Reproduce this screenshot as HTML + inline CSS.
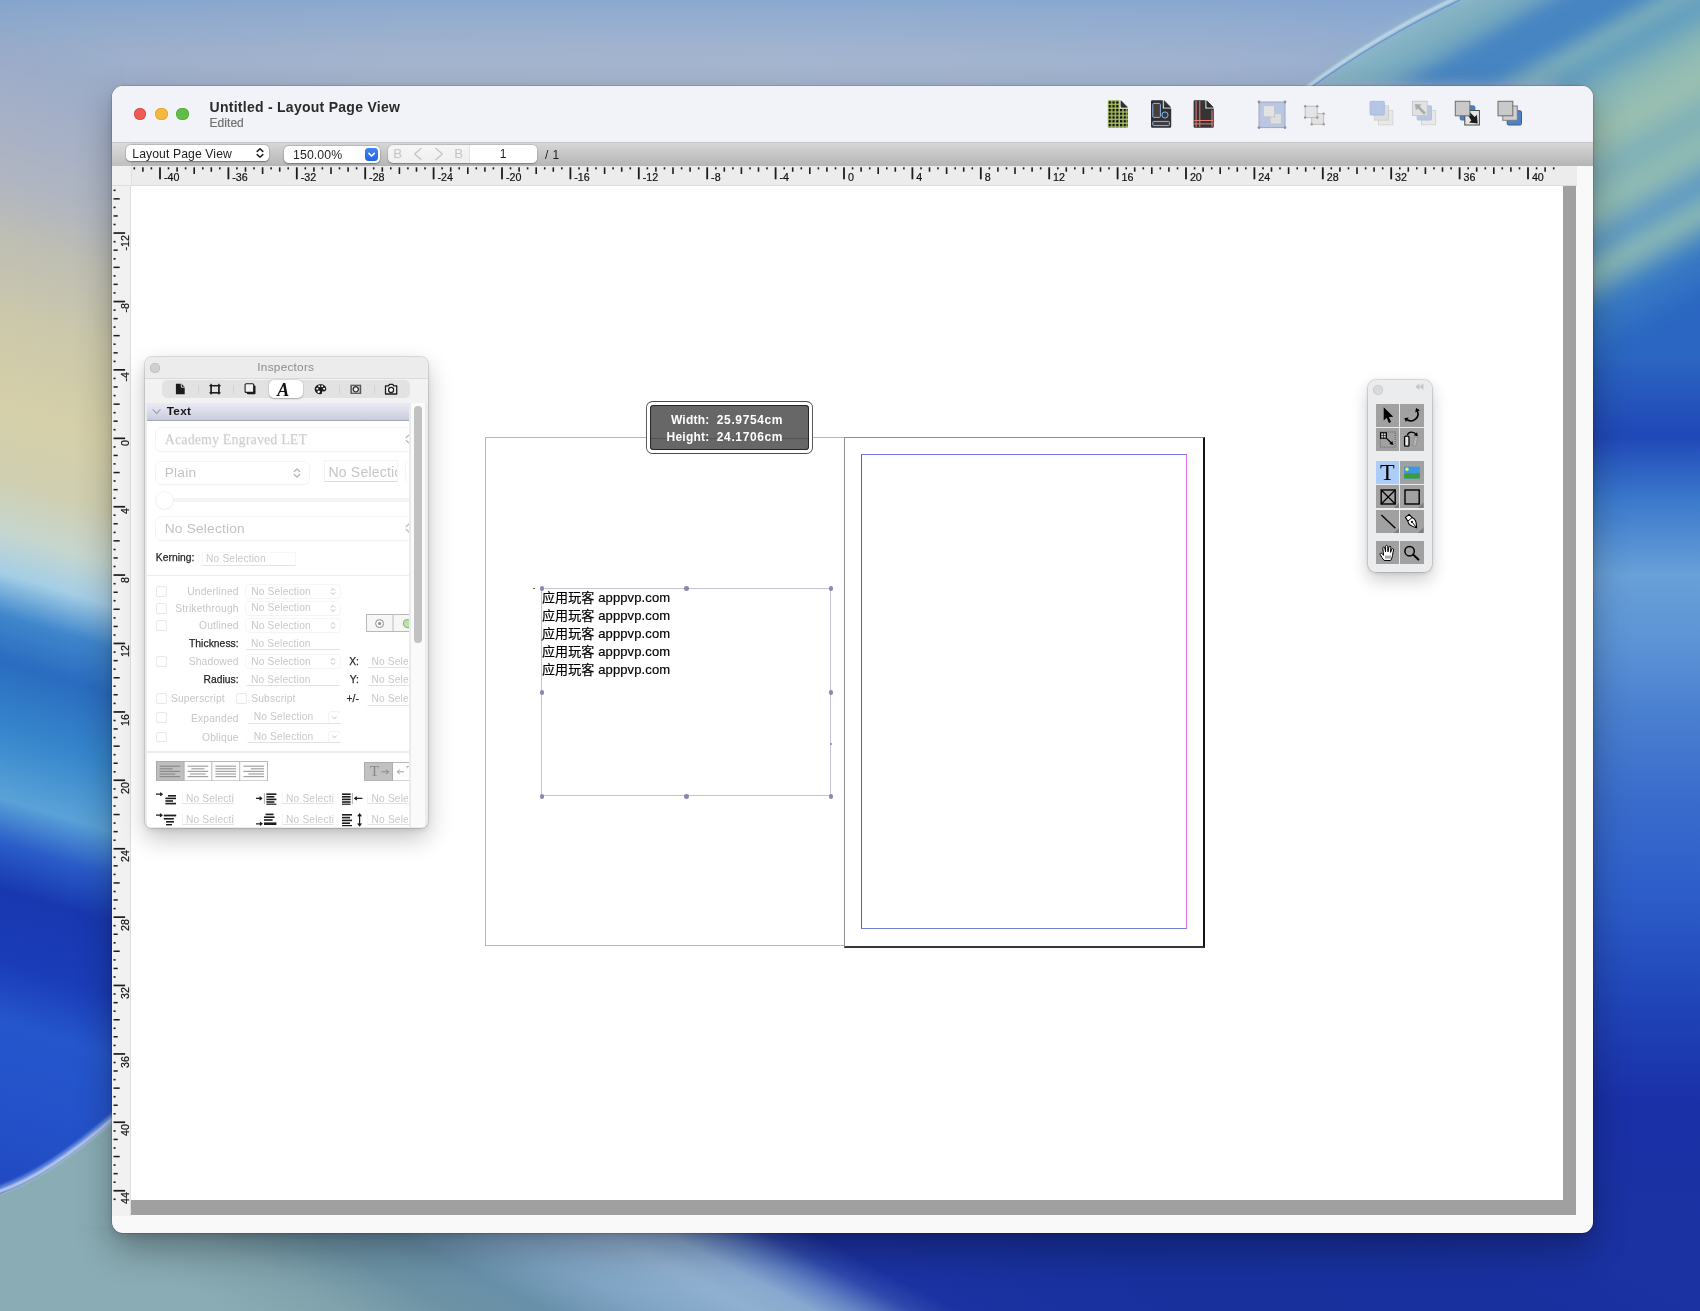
<!DOCTYPE html>
<html lang="zh"><head><meta charset="utf-8"><title>Untitled - Layout Page View</title>
<style>
*{box-sizing:border-box;margin:0;padding:0}
html,body{width:1700px;height:1311px;overflow:hidden;background:#1a30a0}
body{position:relative;font-family:"Liberation Sans","Noto Sans CJK SC",sans-serif;font-size:12px;color:#222;-webkit-font-smoothing:antialiased}
#wall{position:absolute;left:0;top:0;width:1700px;height:1311px}
#win{position:absolute;left:112px;top:86px;width:1481px;height:1147px;border-radius:11px;background:#f9f9f9;overflow:hidden;box-shadow:0 0 0 0.5px rgba(0,0,0,.26),0 16px 36px rgba(0,0,0,.30),0 3px 10px rgba(0,0,0,.12)}
#tbar{position:absolute;left:0;top:0;width:1481px;height:56px;background:#f1f3f8}
.tl{position:absolute;top:21.5px;width:13px;height:13px;border-radius:50%}
#title{position:absolute;left:97.5px;top:12px;font-weight:bold;font-size:13.5px;color:#2a2a2a;letter-spacing:.1px;white-space:nowrap}
#sub{position:absolute;left:97.5px;top:30px;font-size:11px;color:#6d6d6d;white-space:nowrap}
#band{position:absolute;left:0;top:56px;width:1481px;height:24px;background:linear-gradient(#d7d7d7,#c4c4c4 55%,#b5b5b5);border-top:1px solid #c6c6c6}
#hruler{position:absolute;left:0;top:80px;width:1465px;height:20px;background:#ececec;border-bottom:1px solid #dcdcdc}
.hl{position:absolute;top:5px;font-size:10.7px;line-height:12px;color:#111;white-space:nowrap}
#vruler{position:absolute;left:0;top:100px;width:19px;height:1030px;background:#f1f1f1;border-right:1px solid #dedede}
.vl{position:absolute;left:6.7px;font-size:10.7px;line-height:12px;color:#111;white-space:nowrap;transform-origin:0 0;transform:rotate(-90deg) translate(-100%,0)}
#canvas{position:absolute;left:19px;top:100px;width:1445px;height:1029px;background:#a0a0a0}
#paper{position:absolute;left:0;top:0;width:1432px;height:1014px;background:#fff}
.tl{width:12.7px;height:12.7px;top:21.7px}
#title{font-size:14px;letter-spacing:.27px;top:12.5px;color:#2b2b2b}
#sub{font-size:12px;top:29.6px;color:#707070;letter-spacing:.05px}
.pop{position:absolute;background:#fff;border-radius:4.5px;box-shadow:0 .5px 1.5px rgba(0,0,0,.35),0 0 0 .4px rgba(0,0,0,.12);white-space:nowrap;color:#1f1f1f}
#pop1{left:13.7px;top:2.3px;width:143.7px;height:16.2px}
#pop1 span{position:absolute;left:6.6px;top:0.3px;font-size:12.2px;line-height:16px;letter-spacing:.1px}
#pop2{left:172px;top:2.6px;width:95.6px;height:17px}
#pop2 span{position:absolute;left:9px;top:1.2px;font-size:12.3px;line-height:16px;letter-spacing:.1px}
#bluebtn{position:absolute;right:1.4px;top:2px;width:13.2px;height:13px;border-radius:3.4px;background:linear-gradient(#3f84f2,#2566e2)}
#bluebtn svg{display:block}
#seg{position:absolute;left:275.6px;top:1.7px;width:149.8px;height:18.8px;border-radius:5px;background:rgba(255,255,255,.78);box-shadow:0 .5px 1.5px rgba(0,0,0,.3),0 0 0 .4px rgba(0,0,0,.1)}
.sg{position:absolute;top:1.4px;font-size:13.4px;line-height:16px;color:#c6c6c6}
#pgf{position:absolute;left:81.5px;top:0;width:68.3px;height:18.8px;background:#fff;border-radius:0 5px 5px 0;border-left:1px solid #e4e4e4;text-align:center}
#pgf span{font-size:12px;line-height:19px;color:#1f1f1f;position:relative;left:-.6px}
#ofn{position:absolute;left:433px;top:4px;font-size:12px;line-height:16px;color:#1f1f1f;letter-spacing:.4px}

#win{will-change:transform}
#pgL{position:absolute;left:354px;top:251.4px;width:360px;height:508.5px;border:1px solid #b7b7b7}
#pgR{position:absolute;left:713.3px;top:251.1px;width:361.2px;height:510.6px;border-style:solid;border-color:#8e8e8e #131313 #383838 #8e8e8e;border-width:1.6px 2px 2.4px 1.6px;background:#fff}
#mg{position:absolute;left:730.2px;top:268.3px;width:326.1px;height:474.8px;border-style:solid;border-width:1.2px;border-color:#8f90e2 #d493dc #7f88c2 #8a5fba}
#tbox{position:absolute;left:410.4px;top:401.9px;width:289.7px;height:208.2px;border:1px solid #c5c3d8}
#tbox .h{position:absolute;width:4.6px;height:4.6px;border-radius:50%;background:#8a86ae}
#tbox .dot{position:absolute;width:1.8px;height:1.8px;border-radius:50%;background:#444}
#txt{position:absolute;left:411px;top:402.5px;font-size:13px;line-height:18px;color:#000;white-space:nowrap;letter-spacing:.12px}
#tip{position:absolute;left:514.8px;top:215.1px;width:167.4px;height:52.8px;border-radius:6.5px;background:#fff;box-shadow:inset 0 0 0 .9px #4a4a4a;padding:3.9px}
#tipin{width:100%;height:100%;border-radius:3.5px;background:rgba(92,92,92,.93);box-shadow:inset 0 0 0 1px #262626}
#tip table{border-collapse:collapse;position:absolute;left:19px;top:9.2px}
#tip td{font-weight:bold;font-size:11.9px;line-height:17.4px;color:#fff;padding:0;white-space:nowrap}
#tip td.k{text-align:right;padding-right:7.2px;width:45.5px}
#tip td{font-size:12px}
#tip td.k{letter-spacing:.25px}
#tip td.v{letter-spacing:.62px}
#insp{position:absolute;left:145px;top:357px;width:282.6px;height:471px;border-radius:6.5px;background:#ececec;overflow:hidden;box-shadow:0 0 0 .7px rgba(0,0,0,.15),0 10px 24px rgba(0,0,0,.24),0 2px 6px rgba(0,0,0,.10);will-change:transform}
#ititle{position:absolute;left:0;top:0;width:100%;height:21.6px;border-bottom:1px solid #d5d5d5;text-align:center;background:#ebebeb}
#ititle span{font-size:11.8px;line-height:21px;color:#8c8c8c;letter-spacing:.25px;position:relative;top:-.4px;left:-.5px}
#iclose{position:absolute;left:5.4px;top:5.4px;width:10.4px;height:10.4px;border-radius:50%;background:#cdcdcd;box-shadow:inset 0 0 0 .6px #b9b9b9}
#itabs{position:absolute;left:0;top:21.6px;width:100%;height:24px;background:#eeeeee}
#iseg{position:absolute;left:17.3px;top:2.1px;width:248.2px;height:18px;border-radius:5.5px;background:#e2e2e2}
#isel{position:absolute;left:106.5px;top:0;width:34.3px;height:17.6px;border-radius:5px;background:#fff;box-shadow:0 .5px 1.5px rgba(0,0,0,.28),0 0 0 .4px rgba(0,0,0,.08)}
.idv{position:absolute;top:4.3px;width:1px;height:9.6px;background:#d2d2d2}
#itabA{position:absolute;left:115.6px;top:-1.6px;font-family:"Liberation Serif","DejaVu Serif",serif;font-style:italic;font-weight:bold;font-size:17px;line-height:20px;color:#111}
#iscroll{position:absolute;left:2.4px;top:45.5px;width:262px;height:424.2px;background:#fff;overflow:hidden}
#ihead{position:absolute;left:0;top:0;width:262px;height:18px;background:linear-gradient(#e9eaf3,#dcdeea 45%,#c9cbdc);border-bottom:1.3px solid #a4a7bb}
#ihead b{position:absolute;left:19.4px;top:2.6px;font-size:11.8px;line-height:13px;color:#161616;letter-spacing:.25px}
.bp{position:absolute;background:#fff;border-radius:5.5px;box-shadow:0 0 0 .8px #e6e6e6,0 .6px 1.6px rgba(0,0,0,.09);white-space:nowrap;overflow:hidden}
.bp span{position:absolute;left:8.9px;top:2.6px;font-size:14.2px;line-height:17px;color:#c2c2c2;letter-spacing:.25px}
.bp span.serif{font-family:"Liberation Serif","DejaVu Serif",serif;font-size:14px;color:#cdcdcd;letter-spacing:.45px;top:2.7px;text-shadow:.5px .5px 0 #ececec}
.chv{position:absolute}
.bf{position:absolute;background:#fff;border:1px solid #ebebeb;border-bottom:1.6px solid #d4d4d4;white-space:nowrap;overflow:hidden}
.bf span{position:absolute;left:3.2px;top:2.2px;font-size:14.2px;line-height:17px;color:#c6c6c6;letter-spacing:.3px}
#strack{position:absolute;width:110px;height:3.6px;border-radius:2px;background:#f1f1f1}
#sknob{position:absolute;width:17px;height:17px;border-radius:50%;background:#fff;box-shadow:0 0 0 .7px #e9e9e9,0 .8px 2px rgba(0,0,0,.10)}
.dl{position:absolute;font-size:10.3px;line-height:12px;color:#262626;white-space:nowrap;letter-spacing:.3px;-webkit-text-stroke:.25px #262626}
.gl{position:absolute;font-size:10.3px;line-height:12px;color:#c6c6c6;white-space:nowrap;letter-spacing:.32px}
.rl{right:170.7px;text-align:right}
.rl2{right:50.4px;text-align:right}
.cb{position:absolute;width:10.8px;height:10.8px;border-radius:2.6px;background:#fff;box-shadow:inset 0 0 0 .9px #dcdcdc}
.sp{position:absolute;width:93.8px;height:13px;border-radius:3.4px;background:#fff;box-shadow:0 0 0 .7px #e8e8e8,0 .5px 1.2px rgba(0,0,0,.07);white-space:nowrap;overflow:hidden}
.sp span,.sf span{position:absolute;left:5.2px;top:.6px;font-size:10.2px;line-height:12px;color:#c8c8c8;letter-spacing:.36px}
.sf{position:absolute;height:13.2px;background:#fff;border:1px solid #efefef;border-bottom:1.3px solid #d9d9d9;white-space:nowrap;overflow:hidden}
.sf span{left:3.4px;top:.1px}
.cbtn{position:absolute;right:0;top:1px;width:10.6px;height:10.2px;border-radius:2.6px;background:#fff;box-shadow:0 0 0 .7px #e6e6e6,0 .5px 1px rgba(0,0,0,.08)}
.cbtn svg{position:absolute;left:1.8px;top:2.2px}
.sep{position:absolute;left:0;width:262px;height:1.2px;background:#ececec}
#tg{position:absolute;width:50px;height:17.4px;background:#f6f6f6;border:1px solid #b9b9b9}
#al{position:absolute;width:112px;height:20.4px}
#td{position:absolute;width:50px;height:19.4px}
#td .T1,#td .T2{position:absolute;font-family:"Liberation Serif",serif;font-size:15.5px;line-height:16px;top:1.6px;color:#8a8a8a}
#td .T1{left:5.8px}
#td .T2{left:42.4px;color:#a0a0a0}
#isb{position:absolute;left:265px;top:45.5px;width:14.6px;height:424.2px;background:#fafafa;border-left:1px solid #e9e9e9}
#isb i{position:absolute;left:3.3px;top:3px;width:7.6px;height:237.6px;border-radius:3.8px;background:#c2c2c2}
#tools{position:absolute;left:1367.7px;top:379.7px;width:64px;height:191.8px;border-radius:8px;background:#ebecee;box-shadow:0 0 0 .7px rgba(0,0,0,.16),0 8px 18px rgba(0,0,0,.2),0 1px 5px rgba(0,0,0,.12);will-change:transform}
#tclose{position:absolute;left:5.4px;top:5.2px;width:10px;height:10px;border-radius:50%;background:#dadadd;box-shadow:inset 0 0 0 .6px #c6c6ca}
.tc{position:absolute;width:23.4px;height:23.2px;background:#a1a1a1;overflow:hidden}
.tc svg{display:block}
.tsel{background:#abcdf7}
.tsel span{position:absolute;left:0;width:23.4px;text-align:center;top:-2.8px;font-family:"Liberation Serif",serif;font-size:23px;line-height:26px;color:#000}

#strack{width:250px}
.bp{box-shadow:0 0 0 .8px #efefef,0 .6px 1.6px rgba(0,0,0,.07)}
.bp span{font-size:13.7px;letter-spacing:.2px}
.bp span.serif{font-size:13.8px;letter-spacing:.22px}
.bf{border-color:#f0f0f0;border-bottom-color:#d8d8d8}
.bf span{top:3.2px;letter-spacing:.2px;font-size:14px}
.dl{letter-spacing:.05px}
.gl{letter-spacing:.17px}
.cb{box-shadow:inset 0 0 0 .9px #e4e4e4}
.sp{box-shadow:0 0 0 .7px #efefef,0 .5px 1.2px rgba(0,0,0,.06)}
.sp span,.sf span{letter-spacing:.16px}
.sf{border-color:#f4f4f4;border-bottom-color:#dcdcdc}
#itabA{font-size:18px;top:-.8px;left:115px}

#tip span{position:absolute;font-weight:bold;font-size:12px;line-height:14px;color:#fff;white-space:nowrap}
#tip span.k{right:103.6px;letter-spacing:.25px}
#tip span.v{left:71px;letter-spacing:.62px}
#tipin{background:rgba(96,96,96,.9)}
.tsel span{font-size:24px;top:-1.9px}
.hl,.vl{-webkit-text-stroke:.2px #111}

#band:before{content:"";position:absolute;left:0;top:0;width:19px;height:100%;background:rgba(255,255,255,.14)}
#hruler:before{content:"";position:absolute;left:0;top:0;width:19px;height:100%;background:#f1f1f1;border-right:1px solid #e2e2e2}

#tools{width:63.7px;border-radius:7.5px}
#mg{border-color:#7b74e4 #e26ae6 #6f80d6 #8a42cf}
#txt{-webkit-text-stroke:.18px #000}

#tipin{background:rgba(90,90,90,.92)}

#sub{-webkit-text-stroke:.2px #707070}
#iseg{top:1.8px}
.bp{box-shadow:0 0 0 .8px #f2f2f2,0 .6px 1.4px rgba(0,0,0,.06)}
.sp{box-shadow:0 0 0 .7px #f3f3f3,0 .5px 1.1px rgba(0,0,0,.05)}
.cb{box-shadow:inset 0 0 0 .9px #e8e8e8}
.sf{border-color:#f7f7f7;border-bottom-color:#e2e2e2}
.bf{border-color:#f4f4f4;border-bottom-color:#dcdcdc}
.cbtn{box-shadow:0 0 0 .7px #eeeeee,0 .5px 1px rgba(0,0,0,.06)}
#sknob{box-shadow:0 0 0 .7px #efefef,0 .8px 2px rgba(0,0,0,.08)}
#strack{background:#f4f4f4}
#iclose{left:5.2px;top:6px;width:9.8px;height:9.8px;background:#d0d0d0;box-shadow:inset 0 0 0 .8px #bcbcbc}
#itabs{background:#f2f2f2}
#ititle{background:#ececec;border-bottom-color:#dadada}

</style></head>
<body>
<svg id="wall" width="1700" height="1311" viewBox="0 0 1700 1311">
<defs>
<linearGradient id="gT" gradientUnits="userSpaceOnUse" x1="0" y1="0" x2="1700" y2="0">
<stop offset="0" stop-color="#9aacc9"/><stop offset=".066" stop-color="#9fb0cb"/><stop offset=".235" stop-color="#a6b5ce"/><stop offset=".47" stop-color="#a6b6d0"/><stop offset=".7" stop-color="#a1b3cf"/><stop offset=".8" stop-color="#9bafd0"/><stop offset="1" stop-color="#9bafd0"/>
</linearGradient>
<linearGradient id="gTv" x1="0" y1="0" x2="0" y2="1">
<stop offset="0" stop-color="#6f9cd0" stop-opacity=".5"/><stop offset=".3" stop-color="#7aa2d0" stop-opacity=".3"/><stop offset=".65" stop-color="#8fa8cc" stop-opacity=".05"/><stop offset="1" stop-color="#b0b4c0" stop-opacity=".15"/>
</linearGradient>
<linearGradient id="gB" gradientUnits="userSpaceOnUse" x1="0" y1="0" x2="1700" y2="0" gradientTransform="matrix(1 0 1.9 1 -2365 0)">
<stop offset="0" stop-color="#8aacb4"/><stop offset=".06" stop-color="#8aacb4"/><stop offset=".13" stop-color="#80a2ac"/><stop offset=".194" stop-color="#6c92a4"/><stop offset=".247" stop-color="#6890a9"/><stop offset=".306" stop-color="#7fa4c4"/><stop offset=".37" stop-color="#90b0d0"/><stop offset=".405" stop-color="#88a8cf"/><stop offset=".432" stop-color="#6282c4"/><stop offset=".462" stop-color="#2f49ad"/><stop offset=".49" stop-color="#1b32a2"/><stop offset=".647" stop-color="#17309c"/><stop offset=".824" stop-color="#18309e"/><stop offset=".93" stop-color="#1a32a2"/><stop offset="1" stop-color="#1a32a2"/>
</linearGradient>
<linearGradient id="gL" gradientUnits="userSpaceOnUse" x1="0" y1="0" x2="0" y2="1311" gradientTransform="matrix(1 0.3 0 1 0 -15)">
<stop offset="0" stop-color="#93a8c8" stop-opacity="0"/><stop offset=".03" stop-color="#96a9c7" stop-opacity="0"/><stop offset=".075" stop-color="#a1aec8"/><stop offset=".114" stop-color="#a9b2c5"/><stop offset=".152" stop-color="#b1b6c0"/><stop offset=".19" stop-color="#bebeb4"/><stop offset=".25" stop-color="#cbc8ab"/><stop offset=".32" stop-color="#d5d0a9"/><stop offset=".374" stop-color="#d0cfb0"/><stop offset=".416" stop-color="#c6d6cf"/><stop offset=".448" stop-color="#a4cee6"/><stop offset=".48" stop-color="#3f86cc"/><stop offset=".515" stop-color="#2a6cc0"/><stop offset=".568" stop-color="#3686cc"/><stop offset=".62" stop-color="#5aa2d8"/><stop offset=".654" stop-color="#2a5cc8"/><stop offset=".689" stop-color="#1838b0"/><stop offset=".744" stop-color="#1a3cb8"/><stop offset=".79" stop-color="#2556cc"/><stop offset=".85" stop-color="#2452ca"/><stop offset=".93" stop-color="#2048c0"/><stop offset="1" stop-color="#2048c0"/>
</linearGradient>
<linearGradient id="gR" gradientUnits="userSpaceOnUse" x1="0" y1="0" x2="0" y2="1311">
<stop offset="0" stop-color="#86b2b6" stop-opacity="0"/><stop offset=".2" stop-color="#6ea4bc" stop-opacity="0"/><stop offset=".25" stop-color="#2e6cc4"/><stop offset=".278" stop-color="#2a62c0"/><stop offset=".333" stop-color="#2048b8"/><stop offset=".38" stop-color="#3a78cc"/><stop offset=".438" stop-color="#68a0d8"/><stop offset=".488" stop-color="#5c94d6"/><stop offset=".543" stop-color="#4a80d0"/><stop offset=".61" stop-color="#3a6ccc"/><stop offset=".686" stop-color="#2c5cc8"/><stop offset=".763" stop-color="#2045b8"/><stop offset=".84" stop-color="#1a30a8"/><stop offset=".93" stop-color="#1a32a2"/><stop offset="1" stop-color="#1a32a2"/>
</linearGradient>
<linearGradient id="gC" gradientUnits="userSpaceOnUse" x1="1376" y1="38" x2="1566" y2="378">
<stop offset="0" stop-color="#b4d0e6"/><stop offset=".012" stop-color="#8ab6c8"/><stop offset=".06" stop-color="#80b0c0"/><stop offset=".11" stop-color="#72a6c0"/><stop offset=".15" stop-color="#4785c2"/><stop offset=".24" stop-color="#4585c2"/><stop offset=".285" stop-color="#7fb0ba"/><stop offset=".33" stop-color="#5f9cc0"/><stop offset=".41" stop-color="#88b6b6"/><stop offset=".5" stop-color="#9cc0b0"/><stop offset=".58" stop-color="#7fb0b8"/><stop offset=".66" stop-color="#92bcb2"/><stop offset=".74" stop-color="#5c98c4"/><stop offset=".8" stop-color="#8cbab4"/><stop offset=".88" stop-color="#3a7cc4"/><stop offset="1" stop-color="#2a66c2"/>
</linearGradient>
<linearGradient id="gD" gradientUnits="userSpaceOnUse" x1="0" y1="1150" x2="0" y2="1311">
<stop offset="0" stop-color="#98b8bc"/><stop offset=".5" stop-color="#8fb0b8"/><stop offset="1" stop-color="#84a6b0"/>
</linearGradient>
<filter id="bl" x="-5%" y="-5%" width="110%" height="110%"><feGaussianBlur stdDeviation="7"/></filter>
<filter id="bl2" x="-5%" y="-5%" width="110%" height="110%"><feGaussianBlur stdDeviation="1.2"/></filter>
</defs>
<rect x="0" y="0" width="1700" height="1311" fill="#8fa6c4"/>
<rect x="0" y="0" width="1700" height="200" fill="url(#gT)"/>
<rect x="0" y="0" width="1700" height="100" fill="url(#gTv)"/>
<rect x="0" y="0" width="125" height="1311" fill="url(#gL)"/>
<rect x="1580" y="0" width="120" height="1311" fill="url(#gR)"/>
<g filter="url(#bl)">
<path d="M1310,85 Q1375,36 1453,0 L1453,-40 L1760,-40 L1760,360 L1560,360 L1560,85 Z" fill="url(#gC)"/>
</g>
<path d="M1306,88 Q1374,37 1456,-2" fill="none" stroke="#c6dcea" stroke-width="3.4" opacity=".95" filter="url(#bl2)"/>
<path d="M1306,91 Q1376,40 1460,0" fill="none" stroke="#4f86d8" stroke-width="1.2" opacity=".7"/>
<g>
<path d="M-12,1198 L0,1194 Q46,1178.5 112,1122 L135,1102 L135,1311 L-12,1311 Z" fill="#8aacb4"/>
<rect x="0" y="1226" width="1700" height="85" fill="url(#gB)"/>
<path d="M-12,1195 L0,1191 Q46,1175.5 112,1119 L135,1099" fill="none" stroke="#c8d6ee" stroke-width="5" opacity=".9" filter="url(#bl2)"/>
<path d="M-12,1191 L0,1187 Q46,1171.5 112,1115 L135,1095" fill="none" stroke="#5f8ae0" stroke-width="3" opacity=".8" filter="url(#bl2)"/>
</g>
</svg>
<div id="win">
<div id="tbar">
<div class="tl" style="left:21.5px;background:#ee5b54;box-shadow:inset 0 0 0 .6px #d4453e"></div>
<div class="tl" style="left:43px;background:#f5b73c;box-shadow:inset 0 0 0 .6px #d9a02e"></div>
<div class="tl" style="left:64.1px;background:#5fbe45;box-shadow:inset 0 0 0 .6px #4aa436"></div>
<div id="title">Untitled - Layout Page View</div>
<div id="sub">Edited</div>
<svg id="ticons" width="440" height="40" viewBox="0 0 440 40" style="position:absolute;left:990px;top:8px">
<defs>
<pattern id="pgrid" x="0.9" y="1.2" width="3.75" height="3.75" patternUnits="userSpaceOnUse"><rect x="0" y="0" width="2.3" height="2.3" fill="#0b0b0b"/></pattern>
<clipPath id="cdoc"><path d="M0,0 L11.8,0 L11.8,8.3 L20.2,8.3 L20.2,27.6 L0,27.6 Z"/></clipPath>
</defs>
<!-- doc 1 : baseline grid -->
<g transform="translate(5.8,6.2)">
<path d="M0,1.2 Q0,0 1.2,0 L11.8,0 L11.8,8.3 L20.2,8.3 L20.2,26.4 Q20.2,27.6 19,27.6 L1.2,27.6 Q0,27.6 0,26.4 Z" fill="#a6bf5e"/>
<rect x="0" y="0" width="20.2" height="27.6" fill="url(#pgrid)" clip-path="url(#cdoc)"/>
<path d="M13.2,0.6 L19.6,7 L13.2,7 Z" fill="#2f2f31" stroke="#2f2f31" stroke-width=".8" stroke-linejoin="round"/>
</g>
<!-- doc 2 : frames -->
<g transform="translate(49,6.2)">
<path d="M0,1.2 Q0,0 1.2,0 L11.8,0 L11.8,8.3 L20.2,8.3 L20.2,26.4 Q20.2,27.6 19,27.6 L1.2,27.6 Q0,27.6 0,26.4 Z" fill="#2e2f33"/>
<path d="M13.2,0.6 L19.6,7 L13.2,7 Z" fill="#2f2f31" stroke="#2f2f31" stroke-width=".8" stroke-linejoin="round"/>
<rect x="1.8" y="3.2" width="7.6" height="14" rx="1" fill="#4a3e3a" stroke="#8db6ec" stroke-width="1"/>
<circle cx="14" cy="14.8" r="3.1" fill="#34383f" stroke="#8db6ec" stroke-width="1"/>
<rect x="1.8" y="21.2" width="16.6" height="4.2" rx=".8" fill="#3c3e44" stroke="#8db6ec" stroke-width="1"/>
</g>
<!-- doc 3 : guides -->
<g transform="translate(91.6,6.2)">
<path d="M0,1.2 Q0,0 1.2,0 L11.8,0 L11.8,8.3 L20.2,8.3 L20.2,26.4 Q20.2,27.6 19,27.6 L1.2,27.6 Q0,27.6 0,26.4 Z" fill="#343436"/>
<path d="M13.2,0.6 L19.6,7 L13.2,7 Z" fill="#2f2f31" stroke="#2f2f31" stroke-width=".8" stroke-linejoin="round"/>
<g stroke="#e97f76" stroke-width="1" fill="none"><path d="M2.5,0.8V26.8M6.2,0.8V26.8M18.4,10V26.8M0.6,20.3H19.6M0.6,23.7H19.6"/></g>
</g>
<!-- group (selected) -->
<g transform="translate(156,7)">
<rect x="1" y="1" width="26" height="25.6" fill="#b9c7e4" stroke="#9fa9bb" stroke-width="1"/>
<g fill="#8e949e"><circle cx="1" cy="1" r="1.4"/><circle cx="27" cy="1" r="1.4"/><circle cx="1" cy="26.6" r="1.4"/><circle cx="27" cy="26.6" r="1.4"/></g>
<rect x="12" y="12.6" width="11.4" height="10.4" fill="#dedede" stroke="#c2c2c2" stroke-width=".9"/>
<rect x="5.2" y="4.7" width="11.4" height="11.2" fill="#e3e3e3" stroke="#c2c2c2" stroke-width=".9"/>
</g>
<!-- ungroup (disabled) -->
<g transform="translate(202,7)">
<rect x="7.7" y="12.6" width="12" height="10.7" fill="#e2e2e2" stroke="#b9b9b9" stroke-width=".9"/>
<rect x="1.2" y="5.2" width="12" height="11.4" fill="#e4e4e4" stroke="#b9b9b9" stroke-width=".9"/>
<g fill="#9d9d9d"><circle cx="1.2" cy="5.2" r="1.3"/><circle cx="13.2" cy="5.2" r="1.3"/><circle cx="1.2" cy="16.6" r="1.3"/><circle cx="13.2" cy="16.6" r="1.3"/><circle cx="19.7" cy="12.6" r="1.2"/><circle cx="7.7" cy="23.3" r="1.2"/><circle cx="19.7" cy="23.3" r="1.2"/></g>
</g>
<!-- bring to front (disabled) -->
<g transform="translate(268,7)">
<rect x="8.5" y="9.5" width="14.3" height="14.3" fill="#e8e8e8" stroke="#d0d0d0" stroke-width=".8"/>
<rect x="4.3" y="4.8" width="14.3" height="14.3" fill="#dedede" stroke="#cccccc" stroke-width=".8"/>
<rect x="0" y=".3" width="14.4" height="13.8" rx="1" fill="#b5c5e5" stroke="#a9b9d9" stroke-width=".8"/>
</g>
<!-- send forward (disabled) -->
<g transform="translate(310.4,7)">
<rect x="9" y="9.5" width="14.3" height="14.3" fill="#e8e8e8" stroke="#d0d0d0" stroke-width=".8"/>
<rect x="4.8" y="4.8" width="14.3" height="14.3" rx="1" fill="#b9c7e1" stroke="#adbbd5" stroke-width=".8"/>
<rect x="0" y=".3" width="14.8" height="14.2" fill="#e2e2e2" stroke="#c6c6c6" stroke-width=".9"/>
<path d="M2.6,3 L9.4,3.6 L7.4,5.6 L13.6,11.8 L11.6,13.8 L5.4,7.6 L3.4,9.6 Z" fill="#ababab"/>
</g>
<!-- send backward -->
<g transform="translate(353.3,7)">
<rect x="4.8" y="4.8" width="14.8" height="14.3" rx="1.5" fill="#4a82c8" stroke="#3c68a8" stroke-width=".8"/>
<rect x="9.5" y="9.5" width="14.6" height="14.5" fill="#e5e5e5" stroke="#4a4a4a" stroke-width="1"/>
<path d="M12,13 L14.2,10.8 L19.4,16 L21.6,13.8 L22.4,22.4 L13.8,21.6 L16,19.4 Z" fill="#1b1b1b"/>
<rect x="0" y=".3" width="14.6" height="14.5" fill="#c9c9c9" stroke="#6d6d6d" stroke-width="1"/>
</g>
<!-- send to back -->
<g transform="translate(396,7)">
<rect x="9.2" y="9.8" width="14.3" height="14.2" rx="1.5" fill="#4a82c8" stroke="#3a5c96" stroke-width="1"/>
<rect x="4.8" y="5" width="14.5" height="14.3" fill="#d0d0d0" stroke="#7d7d7d" stroke-width="1"/>
<rect x="0" y=".3" width="14.8" height="14.5" fill="#c9c9c9" stroke="#6d6d6d" stroke-width="1"/>
</g>
</svg>
</div>
<div id="band">
<div class="pop" id="pop1"><span>Layout Page View</span>
<svg width="8" height="12" viewBox="0 0 8 12" style="position:absolute;right:5.5px;top:2.2px"><path d="M1.2,4.4 L4,1.8 L6.8,4.4 M1.2,7.6 L4,10.2 L6.8,7.6" fill="none" stroke="#222" stroke-width="1.5" stroke-linecap="round" stroke-linejoin="round"/></svg>
</div>
<div class="pop" id="pop2"><span>150.00%</span>
<div id="bluebtn"><svg width="13" height="13" viewBox="0 0 13 13"><path d="M3.9,5.4 L6.6,8 L9.3,5.4" fill="none" stroke="#fff" stroke-width="1.6" stroke-linecap="round" stroke-linejoin="round"/></svg></div>
</div>
<div id="seg">
<span class="sg" style="left:5.6px">B</span>
<svg width="12" height="14" viewBox="0 0 12 14" style="position:absolute;left:24.5px;top:2.6px"><path d="M9,1.5 L2.6,7 L9,12.5" fill="none" stroke="#c3c3c3" stroke-width="1.2" stroke-linecap="round" stroke-linejoin="round"/></svg>
<svg width="12" height="14" viewBox="0 0 12 14" style="position:absolute;left:45.4px;top:2.6px"><path d="M3,1.5 L9.4,7 L3,12.5" fill="none" stroke="#c3c3c3" stroke-width="1.2" stroke-linecap="round" stroke-linejoin="round"/></svg>
<span class="sg" style="left:66.6px">B</span>
<div id="pgf"><span>1</span></div>
</div>
<span id="ofn">/ 1</span>
</div>
<div id="hruler">
<svg width="1465" height="20" style="position:absolute;left:0;top:0">
<rect x="21.5" y="1.3" width="1.6" height="2.1" fill="#1c1c1c"/><rect x="30.1" y="1.3" width="1.6" height="4.4" fill="#1c1c1c"/><rect x="38.6" y="1.3" width="1.6" height="2.1" fill="#1c1c1c"/><rect x="47.1" y="1.3" width="1.8" height="12.0" fill="#1c1c1c"/><rect x="55.7" y="1.3" width="1.6" height="2.1" fill="#1c1c1c"/><rect x="64.3" y="1.3" width="1.6" height="4.4" fill="#1c1c1c"/><rect x="72.8" y="1.3" width="1.6" height="2.1" fill="#1c1c1c"/><rect x="81.4" y="1.3" width="1.6" height="6.7" fill="#1c1c1c"/><rect x="90.0" y="1.3" width="1.6" height="2.1" fill="#1c1c1c"/><rect x="98.5" y="1.3" width="1.6" height="4.4" fill="#1c1c1c"/><rect x="107.0" y="1.3" width="1.6" height="2.1" fill="#1c1c1c"/><rect x="115.5" y="1.3" width="1.8" height="12.0" fill="#1c1c1c"/><rect x="124.1" y="1.3" width="1.6" height="2.1" fill="#1c1c1c"/><rect x="132.7" y="1.3" width="1.6" height="4.4" fill="#1c1c1c"/><rect x="141.2" y="1.3" width="1.6" height="2.1" fill="#1c1c1c"/><rect x="149.8" y="1.3" width="1.6" height="6.7" fill="#1c1c1c"/><rect x="158.3" y="1.3" width="1.6" height="2.1" fill="#1c1c1c"/><rect x="166.9" y="1.3" width="1.6" height="4.4" fill="#1c1c1c"/><rect x="175.4" y="1.3" width="1.6" height="2.1" fill="#1c1c1c"/><rect x="183.9" y="1.3" width="1.8" height="12.0" fill="#1c1c1c"/><rect x="192.5" y="1.3" width="1.6" height="2.1" fill="#1c1c1c"/><rect x="201.1" y="1.3" width="1.6" height="4.4" fill="#1c1c1c"/><rect x="209.6" y="1.3" width="1.6" height="2.1" fill="#1c1c1c"/><rect x="218.2" y="1.3" width="1.6" height="6.7" fill="#1c1c1c"/><rect x="226.7" y="1.3" width="1.6" height="2.1" fill="#1c1c1c"/><rect x="235.3" y="1.3" width="1.6" height="4.4" fill="#1c1c1c"/><rect x="243.8" y="1.3" width="1.6" height="2.1" fill="#1c1c1c"/><rect x="252.3" y="1.3" width="1.8" height="12.0" fill="#1c1c1c"/><rect x="260.9" y="1.3" width="1.6" height="2.1" fill="#1c1c1c"/><rect x="269.5" y="1.3" width="1.6" height="4.4" fill="#1c1c1c"/><rect x="278.0" y="1.3" width="1.6" height="2.1" fill="#1c1c1c"/><rect x="286.6" y="1.3" width="1.6" height="6.7" fill="#1c1c1c"/><rect x="295.1" y="1.3" width="1.6" height="2.1" fill="#1c1c1c"/><rect x="303.7" y="1.3" width="1.6" height="4.4" fill="#1c1c1c"/><rect x="312.2" y="1.3" width="1.6" height="2.1" fill="#1c1c1c"/><rect x="320.7" y="1.3" width="1.8" height="12.0" fill="#1c1c1c"/><rect x="329.3" y="1.3" width="1.6" height="2.1" fill="#1c1c1c"/><rect x="337.9" y="1.3" width="1.6" height="4.4" fill="#1c1c1c"/><rect x="346.4" y="1.3" width="1.6" height="2.1" fill="#1c1c1c"/><rect x="355.0" y="1.3" width="1.6" height="6.7" fill="#1c1c1c"/><rect x="363.5" y="1.3" width="1.6" height="2.1" fill="#1c1c1c"/><rect x="372.1" y="1.3" width="1.6" height="4.4" fill="#1c1c1c"/><rect x="380.6" y="1.3" width="1.6" height="2.1" fill="#1c1c1c"/><rect x="389.1" y="1.3" width="1.8" height="12.0" fill="#1c1c1c"/><rect x="397.7" y="1.3" width="1.6" height="2.1" fill="#1c1c1c"/><rect x="406.3" y="1.3" width="1.6" height="4.4" fill="#1c1c1c"/><rect x="414.8" y="1.3" width="1.6" height="2.1" fill="#1c1c1c"/><rect x="423.4" y="1.3" width="1.6" height="6.7" fill="#1c1c1c"/><rect x="431.9" y="1.3" width="1.6" height="2.1" fill="#1c1c1c"/><rect x="440.5" y="1.3" width="1.6" height="4.4" fill="#1c1c1c"/><rect x="449.0" y="1.3" width="1.6" height="2.1" fill="#1c1c1c"/><rect x="457.5" y="1.3" width="1.8" height="12.0" fill="#1c1c1c"/><rect x="466.2" y="1.3" width="1.6" height="2.1" fill="#1c1c1c"/><rect x="474.7" y="1.3" width="1.6" height="4.4" fill="#1c1c1c"/><rect x="483.2" y="1.3" width="1.6" height="2.1" fill="#1c1c1c"/><rect x="491.8" y="1.3" width="1.6" height="6.7" fill="#1c1c1c"/><rect x="500.3" y="1.3" width="1.6" height="2.1" fill="#1c1c1c"/><rect x="508.9" y="1.3" width="1.6" height="4.4" fill="#1c1c1c"/><rect x="517.5" y="1.3" width="1.6" height="2.1" fill="#1c1c1c"/><rect x="525.9" y="1.3" width="1.8" height="12.0" fill="#1c1c1c"/><rect x="534.6" y="1.3" width="1.6" height="2.1" fill="#1c1c1c"/><rect x="543.1" y="1.3" width="1.6" height="4.4" fill="#1c1c1c"/><rect x="551.7" y="1.3" width="1.6" height="2.1" fill="#1c1c1c"/><rect x="560.2" y="1.3" width="1.6" height="6.7" fill="#1c1c1c"/><rect x="568.8" y="1.3" width="1.6" height="2.1" fill="#1c1c1c"/><rect x="577.3" y="1.3" width="1.6" height="4.4" fill="#1c1c1c"/><rect x="585.9" y="1.3" width="1.6" height="2.1" fill="#1c1c1c"/><rect x="594.3" y="1.3" width="1.8" height="12.0" fill="#1c1c1c"/><rect x="603.0" y="1.3" width="1.6" height="2.1" fill="#1c1c1c"/><rect x="611.5" y="1.3" width="1.6" height="4.4" fill="#1c1c1c"/><rect x="620.1" y="1.3" width="1.6" height="2.1" fill="#1c1c1c"/><rect x="628.6" y="1.3" width="1.6" height="6.7" fill="#1c1c1c"/><rect x="637.2" y="1.3" width="1.6" height="2.1" fill="#1c1c1c"/><rect x="645.7" y="1.3" width="1.6" height="4.4" fill="#1c1c1c"/><rect x="654.2" y="1.3" width="1.6" height="2.1" fill="#1c1c1c"/><rect x="662.7" y="1.3" width="1.8" height="12.0" fill="#1c1c1c"/><rect x="671.4" y="1.3" width="1.6" height="2.1" fill="#1c1c1c"/><rect x="679.9" y="1.3" width="1.6" height="4.4" fill="#1c1c1c"/><rect x="688.5" y="1.3" width="1.6" height="2.1" fill="#1c1c1c"/><rect x="697.0" y="1.3" width="1.6" height="6.7" fill="#1c1c1c"/><rect x="705.6" y="1.3" width="1.6" height="2.1" fill="#1c1c1c"/><rect x="714.1" y="1.3" width="1.6" height="4.4" fill="#1c1c1c"/><rect x="722.7" y="1.3" width="1.6" height="2.1" fill="#1c1c1c"/><rect x="731.1" y="1.3" width="1.8" height="12.0" fill="#1c1c1c"/><rect x="739.8" y="1.3" width="1.6" height="2.1" fill="#1c1c1c"/><rect x="748.3" y="1.3" width="1.6" height="4.4" fill="#1c1c1c"/><rect x="756.9" y="1.3" width="1.6" height="2.1" fill="#1c1c1c"/><rect x="765.4" y="1.3" width="1.6" height="6.7" fill="#1c1c1c"/><rect x="774.0" y="1.3" width="1.6" height="2.1" fill="#1c1c1c"/><rect x="782.5" y="1.3" width="1.6" height="4.4" fill="#1c1c1c"/><rect x="791.1" y="1.3" width="1.6" height="2.1" fill="#1c1c1c"/><rect x="799.5" y="1.3" width="1.8" height="12.0" fill="#1c1c1c"/><rect x="808.2" y="1.3" width="1.6" height="2.1" fill="#1c1c1c"/><rect x="816.7" y="1.3" width="1.6" height="4.4" fill="#1c1c1c"/><rect x="825.2" y="1.3" width="1.6" height="2.1" fill="#1c1c1c"/><rect x="833.8" y="1.3" width="1.6" height="6.7" fill="#1c1c1c"/><rect x="842.4" y="1.3" width="1.6" height="2.1" fill="#1c1c1c"/><rect x="850.9" y="1.3" width="1.6" height="4.4" fill="#1c1c1c"/><rect x="859.5" y="1.3" width="1.6" height="2.1" fill="#1c1c1c"/><rect x="867.9" y="1.3" width="1.8" height="12.0" fill="#1c1c1c"/><rect x="876.6" y="1.3" width="1.6" height="2.1" fill="#1c1c1c"/><rect x="885.1" y="1.3" width="1.6" height="4.4" fill="#1c1c1c"/><rect x="893.7" y="1.3" width="1.6" height="2.1" fill="#1c1c1c"/><rect x="902.2" y="1.3" width="1.6" height="6.7" fill="#1c1c1c"/><rect x="910.8" y="1.3" width="1.6" height="2.1" fill="#1c1c1c"/><rect x="919.3" y="1.3" width="1.6" height="4.4" fill="#1c1c1c"/><rect x="927.9" y="1.3" width="1.6" height="2.1" fill="#1c1c1c"/><rect x="936.3" y="1.3" width="1.8" height="12.0" fill="#1c1c1c"/><rect x="945.0" y="1.3" width="1.6" height="2.1" fill="#1c1c1c"/><rect x="953.5" y="1.3" width="1.6" height="4.4" fill="#1c1c1c"/><rect x="962.0" y="1.3" width="1.6" height="2.1" fill="#1c1c1c"/><rect x="970.6" y="1.3" width="1.6" height="6.7" fill="#1c1c1c"/><rect x="979.2" y="1.3" width="1.6" height="2.1" fill="#1c1c1c"/><rect x="987.7" y="1.3" width="1.6" height="4.4" fill="#1c1c1c"/><rect x="996.2" y="1.3" width="1.6" height="2.1" fill="#1c1c1c"/><rect x="1004.7" y="1.3" width="1.8" height="12.0" fill="#1c1c1c"/><rect x="1013.4" y="1.3" width="1.6" height="2.1" fill="#1c1c1c"/><rect x="1021.9" y="1.3" width="1.6" height="4.4" fill="#1c1c1c"/><rect x="1030.5" y="1.3" width="1.6" height="2.1" fill="#1c1c1c"/><rect x="1039.0" y="1.3" width="1.6" height="6.7" fill="#1c1c1c"/><rect x="1047.5" y="1.3" width="1.6" height="2.1" fill="#1c1c1c"/><rect x="1056.1" y="1.3" width="1.6" height="4.4" fill="#1c1c1c"/><rect x="1064.7" y="1.3" width="1.6" height="2.1" fill="#1c1c1c"/><rect x="1073.1" y="1.3" width="1.8" height="12.0" fill="#1c1c1c"/><rect x="1081.8" y="1.3" width="1.6" height="2.1" fill="#1c1c1c"/><rect x="1090.3" y="1.3" width="1.6" height="4.4" fill="#1c1c1c"/><rect x="1098.9" y="1.3" width="1.6" height="2.1" fill="#1c1c1c"/><rect x="1107.4" y="1.3" width="1.6" height="6.7" fill="#1c1c1c"/><rect x="1116.0" y="1.3" width="1.6" height="2.1" fill="#1c1c1c"/><rect x="1124.5" y="1.3" width="1.6" height="4.4" fill="#1c1c1c"/><rect x="1133.0" y="1.3" width="1.6" height="2.1" fill="#1c1c1c"/><rect x="1141.5" y="1.3" width="1.8" height="12.0" fill="#1c1c1c"/><rect x="1150.2" y="1.3" width="1.6" height="2.1" fill="#1c1c1c"/><rect x="1158.7" y="1.3" width="1.6" height="4.4" fill="#1c1c1c"/><rect x="1167.2" y="1.3" width="1.6" height="2.1" fill="#1c1c1c"/><rect x="1175.8" y="1.3" width="1.6" height="6.7" fill="#1c1c1c"/><rect x="1184.4" y="1.3" width="1.6" height="2.1" fill="#1c1c1c"/><rect x="1192.9" y="1.3" width="1.6" height="4.4" fill="#1c1c1c"/><rect x="1201.5" y="1.3" width="1.6" height="2.1" fill="#1c1c1c"/><rect x="1209.9" y="1.3" width="1.8" height="12.0" fill="#1c1c1c"/><rect x="1218.5" y="1.3" width="1.6" height="2.1" fill="#1c1c1c"/><rect x="1227.1" y="1.3" width="1.6" height="4.4" fill="#1c1c1c"/><rect x="1235.7" y="1.3" width="1.6" height="2.1" fill="#1c1c1c"/><rect x="1244.2" y="1.3" width="1.6" height="6.7" fill="#1c1c1c"/><rect x="1252.8" y="1.3" width="1.6" height="2.1" fill="#1c1c1c"/><rect x="1261.3" y="1.3" width="1.6" height="4.4" fill="#1c1c1c"/><rect x="1269.9" y="1.3" width="1.6" height="2.1" fill="#1c1c1c"/><rect x="1278.3" y="1.3" width="1.8" height="12.0" fill="#1c1c1c"/><rect x="1287.0" y="1.3" width="1.6" height="2.1" fill="#1c1c1c"/><rect x="1295.5" y="1.3" width="1.6" height="4.4" fill="#1c1c1c"/><rect x="1304.0" y="1.3" width="1.6" height="2.1" fill="#1c1c1c"/><rect x="1312.6" y="1.3" width="1.6" height="6.7" fill="#1c1c1c"/><rect x="1321.2" y="1.3" width="1.6" height="2.1" fill="#1c1c1c"/><rect x="1329.7" y="1.3" width="1.6" height="4.4" fill="#1c1c1c"/><rect x="1338.3" y="1.3" width="1.6" height="2.1" fill="#1c1c1c"/><rect x="1346.7" y="1.3" width="1.8" height="12.0" fill="#1c1c1c"/><rect x="1355.4" y="1.3" width="1.6" height="2.1" fill="#1c1c1c"/><rect x="1363.9" y="1.3" width="1.6" height="4.4" fill="#1c1c1c"/><rect x="1372.5" y="1.3" width="1.6" height="2.1" fill="#1c1c1c"/><rect x="1381.0" y="1.3" width="1.6" height="6.7" fill="#1c1c1c"/><rect x="1389.5" y="1.3" width="1.6" height="2.1" fill="#1c1c1c"/><rect x="1398.1" y="1.3" width="1.6" height="4.4" fill="#1c1c1c"/><rect x="1406.7" y="1.3" width="1.6" height="2.1" fill="#1c1c1c"/><rect x="1415.1" y="1.3" width="1.8" height="12.0" fill="#1c1c1c"/><rect x="1423.8" y="1.3" width="1.6" height="2.1" fill="#1c1c1c"/><rect x="1432.3" y="1.3" width="1.6" height="4.4" fill="#1c1c1c"/><rect x="1440.9" y="1.3" width="1.6" height="2.1" fill="#1c1c1c"/>
</svg>
<span class="hl" style="left:51.9px">-40</span><span class="hl" style="left:120.3px">-36</span><span class="hl" style="left:188.7px">-32</span><span class="hl" style="left:257.1px">-28</span><span class="hl" style="left:325.5px">-24</span><span class="hl" style="left:393.9px">-20</span><span class="hl" style="left:462.3px">-16</span><span class="hl" style="left:530.7px">-12</span><span class="hl" style="left:599.1px">-8</span><span class="hl" style="left:667.5px">-4</span><span class="hl" style="left:735.9px">0</span><span class="hl" style="left:804.3px">4</span><span class="hl" style="left:872.7px">8</span><span class="hl" style="left:941.1px">12</span><span class="hl" style="left:1009.5px">16</span><span class="hl" style="left:1077.9px">20</span><span class="hl" style="left:1146.3px">24</span><span class="hl" style="left:1214.7px">28</span><span class="hl" style="left:1283.1px">32</span><span class="hl" style="left:1351.5px">36</span><span class="hl" style="left:1419.9px">40</span>
</div>
<div id="vruler">
<svg width="19" height="1030" style="position:absolute;left:0;top:0">
<rect x="1.5" y="3.5" width="2.1" height="1.6" fill="#1c1c1c"/><rect x="1.5" y="12.1" width="6.2" height="1.5" fill="#1c1c1c"/><rect x="1.5" y="20.6" width="2.1" height="1.6" fill="#1c1c1c"/><rect x="1.5" y="29.2" width="4.2" height="1.5" fill="#1c1c1c"/><rect x="1.5" y="37.7" width="2.1" height="1.6" fill="#1c1c1c"/><rect x="1.5" y="46.2" width="11.6" height="1.7" fill="#1c1c1c"/><rect x="1.5" y="54.9" width="2.1" height="1.6" fill="#1c1c1c"/><rect x="1.5" y="63.4" width="4.2" height="1.5" fill="#1c1c1c"/><rect x="1.5" y="72.0" width="2.1" height="1.6" fill="#1c1c1c"/><rect x="1.5" y="80.6" width="6.2" height="1.5" fill="#1c1c1c"/><rect x="1.5" y="89.1" width="2.1" height="1.6" fill="#1c1c1c"/><rect x="1.5" y="97.6" width="4.2" height="1.5" fill="#1c1c1c"/><rect x="1.5" y="106.1" width="2.1" height="1.6" fill="#1c1c1c"/><rect x="1.5" y="114.7" width="11.6" height="1.7" fill="#1c1c1c"/><rect x="1.5" y="123.3" width="2.1" height="1.6" fill="#1c1c1c"/><rect x="1.5" y="131.9" width="4.2" height="1.5" fill="#1c1c1c"/><rect x="1.5" y="140.3" width="2.1" height="1.6" fill="#1c1c1c"/><rect x="1.5" y="148.9" width="6.2" height="1.5" fill="#1c1c1c"/><rect x="1.5" y="157.4" width="2.1" height="1.6" fill="#1c1c1c"/><rect x="1.5" y="166.1" width="4.2" height="1.5" fill="#1c1c1c"/><rect x="1.5" y="174.6" width="2.1" height="1.6" fill="#1c1c1c"/><rect x="1.5" y="183.0" width="11.6" height="1.7" fill="#1c1c1c"/><rect x="1.5" y="191.6" width="2.1" height="1.6" fill="#1c1c1c"/><rect x="1.5" y="200.2" width="4.2" height="1.5" fill="#1c1c1c"/><rect x="1.5" y="208.8" width="2.1" height="1.6" fill="#1c1c1c"/><rect x="1.5" y="217.4" width="6.2" height="1.5" fill="#1c1c1c"/><rect x="1.5" y="225.9" width="2.1" height="1.6" fill="#1c1c1c"/><rect x="1.5" y="234.4" width="4.2" height="1.5" fill="#1c1c1c"/><rect x="1.5" y="242.9" width="2.1" height="1.6" fill="#1c1c1c"/><rect x="1.5" y="251.5" width="11.6" height="1.7" fill="#1c1c1c"/><rect x="1.5" y="260.1" width="2.1" height="1.6" fill="#1c1c1c"/><rect x="1.5" y="268.7" width="4.2" height="1.5" fill="#1c1c1c"/><rect x="1.5" y="277.1" width="2.1" height="1.6" fill="#1c1c1c"/><rect x="1.5" y="285.8" width="6.2" height="1.5" fill="#1c1c1c"/><rect x="1.5" y="294.2" width="2.1" height="1.6" fill="#1c1c1c"/><rect x="1.5" y="302.9" width="4.2" height="1.5" fill="#1c1c1c"/><rect x="1.5" y="311.4" width="2.1" height="1.6" fill="#1c1c1c"/><rect x="1.5" y="319.9" width="11.6" height="1.7" fill="#1c1c1c"/><rect x="1.5" y="328.4" width="2.1" height="1.6" fill="#1c1c1c"/><rect x="1.5" y="337.0" width="4.2" height="1.5" fill="#1c1c1c"/><rect x="1.5" y="345.6" width="2.1" height="1.6" fill="#1c1c1c"/><rect x="1.5" y="354.1" width="6.2" height="1.5" fill="#1c1c1c"/><rect x="1.5" y="362.7" width="2.1" height="1.6" fill="#1c1c1c"/><rect x="1.5" y="371.2" width="4.2" height="1.5" fill="#1c1c1c"/><rect x="1.5" y="379.7" width="2.1" height="1.6" fill="#1c1c1c"/><rect x="1.5" y="388.2" width="11.6" height="1.7" fill="#1c1c1c"/><rect x="1.5" y="396.9" width="2.1" height="1.6" fill="#1c1c1c"/><rect x="1.5" y="405.5" width="4.2" height="1.5" fill="#1c1c1c"/><rect x="1.5" y="413.9" width="2.1" height="1.6" fill="#1c1c1c"/><rect x="1.5" y="422.5" width="6.2" height="1.5" fill="#1c1c1c"/><rect x="1.5" y="431.1" width="2.1" height="1.6" fill="#1c1c1c"/><rect x="1.5" y="439.7" width="4.2" height="1.5" fill="#1c1c1c"/><rect x="1.5" y="448.2" width="2.1" height="1.6" fill="#1c1c1c"/><rect x="1.5" y="456.6" width="11.6" height="1.7" fill="#1c1c1c"/><rect x="1.5" y="465.3" width="2.1" height="1.6" fill="#1c1c1c"/><rect x="1.5" y="473.9" width="4.2" height="1.5" fill="#1c1c1c"/><rect x="1.5" y="482.4" width="2.1" height="1.6" fill="#1c1c1c"/><rect x="1.5" y="491.0" width="6.2" height="1.5" fill="#1c1c1c"/><rect x="1.5" y="499.4" width="2.1" height="1.6" fill="#1c1c1c"/><rect x="1.5" y="508.0" width="4.2" height="1.5" fill="#1c1c1c"/><rect x="1.5" y="516.6" width="2.1" height="1.6" fill="#1c1c1c"/><rect x="1.5" y="525.1" width="11.6" height="1.7" fill="#1c1c1c"/><rect x="1.5" y="533.7" width="2.1" height="1.6" fill="#1c1c1c"/><rect x="1.5" y="542.2" width="4.2" height="1.5" fill="#1c1c1c"/><rect x="1.5" y="550.8" width="2.1" height="1.6" fill="#1c1c1c"/><rect x="1.5" y="559.4" width="6.2" height="1.5" fill="#1c1c1c"/><rect x="1.5" y="567.9" width="2.1" height="1.6" fill="#1c1c1c"/><rect x="1.5" y="576.5" width="4.2" height="1.5" fill="#1c1c1c"/><rect x="1.5" y="585.0" width="2.1" height="1.6" fill="#1c1c1c"/><rect x="1.5" y="593.4" width="11.6" height="1.7" fill="#1c1c1c"/><rect x="1.5" y="602.1" width="2.1" height="1.6" fill="#1c1c1c"/><rect x="1.5" y="610.7" width="4.2" height="1.5" fill="#1c1c1c"/><rect x="1.5" y="619.2" width="2.1" height="1.6" fill="#1c1c1c"/><rect x="1.5" y="627.8" width="6.2" height="1.5" fill="#1c1c1c"/><rect x="1.5" y="636.3" width="2.1" height="1.6" fill="#1c1c1c"/><rect x="1.5" y="644.9" width="4.2" height="1.5" fill="#1c1c1c"/><rect x="1.5" y="653.4" width="2.1" height="1.6" fill="#1c1c1c"/><rect x="1.5" y="661.9" width="11.6" height="1.7" fill="#1c1c1c"/><rect x="1.5" y="670.5" width="2.1" height="1.6" fill="#1c1c1c"/><rect x="1.5" y="679.1" width="4.2" height="1.5" fill="#1c1c1c"/><rect x="1.5" y="687.6" width="2.1" height="1.6" fill="#1c1c1c"/><rect x="1.5" y="696.2" width="6.2" height="1.5" fill="#1c1c1c"/><rect x="1.5" y="704.7" width="2.1" height="1.6" fill="#1c1c1c"/><rect x="1.5" y="713.2" width="4.2" height="1.5" fill="#1c1c1c"/><rect x="1.5" y="721.8" width="2.1" height="1.6" fill="#1c1c1c"/><rect x="1.5" y="730.3" width="11.6" height="1.7" fill="#1c1c1c"/><rect x="1.5" y="738.9" width="2.1" height="1.6" fill="#1c1c1c"/><rect x="1.5" y="747.5" width="4.2" height="1.5" fill="#1c1c1c"/><rect x="1.5" y="756.0" width="2.1" height="1.6" fill="#1c1c1c"/><rect x="1.5" y="764.5" width="6.2" height="1.5" fill="#1c1c1c"/><rect x="1.5" y="773.1" width="2.1" height="1.6" fill="#1c1c1c"/><rect x="1.5" y="781.7" width="4.2" height="1.5" fill="#1c1c1c"/><rect x="1.5" y="790.2" width="2.1" height="1.6" fill="#1c1c1c"/><rect x="1.5" y="798.6" width="11.6" height="1.7" fill="#1c1c1c"/><rect x="1.5" y="807.2" width="2.1" height="1.6" fill="#1c1c1c"/><rect x="1.5" y="815.9" width="4.2" height="1.5" fill="#1c1c1c"/><rect x="1.5" y="824.4" width="2.1" height="1.6" fill="#1c1c1c"/><rect x="1.5" y="833.0" width="6.2" height="1.5" fill="#1c1c1c"/><rect x="1.5" y="841.5" width="2.1" height="1.6" fill="#1c1c1c"/><rect x="1.5" y="850.0" width="4.2" height="1.5" fill="#1c1c1c"/><rect x="1.5" y="858.6" width="2.1" height="1.6" fill="#1c1c1c"/><rect x="1.5" y="867.1" width="11.6" height="1.7" fill="#1c1c1c"/><rect x="1.5" y="875.7" width="2.1" height="1.6" fill="#1c1c1c"/><rect x="1.5" y="884.2" width="4.2" height="1.5" fill="#1c1c1c"/><rect x="1.5" y="892.8" width="2.1" height="1.6" fill="#1c1c1c"/><rect x="1.5" y="901.4" width="6.2" height="1.5" fill="#1c1c1c"/><rect x="1.5" y="909.9" width="2.1" height="1.6" fill="#1c1c1c"/><rect x="1.5" y="918.5" width="4.2" height="1.5" fill="#1c1c1c"/><rect x="1.5" y="927.0" width="2.1" height="1.6" fill="#1c1c1c"/><rect x="1.5" y="935.4" width="11.6" height="1.7" fill="#1c1c1c"/><rect x="1.5" y="944.1" width="2.1" height="1.6" fill="#1c1c1c"/><rect x="1.5" y="952.7" width="4.2" height="1.5" fill="#1c1c1c"/><rect x="1.5" y="961.2" width="2.1" height="1.6" fill="#1c1c1c"/><rect x="1.5" y="969.8" width="6.2" height="1.5" fill="#1c1c1c"/><rect x="1.5" y="978.3" width="2.1" height="1.6" fill="#1c1c1c"/><rect x="1.5" y="986.9" width="4.2" height="1.5" fill="#1c1c1c"/><rect x="1.5" y="995.4" width="2.1" height="1.6" fill="#1c1c1c"/><rect x="1.5" y="1003.9" width="11.6" height="1.7" fill="#1c1c1c"/><rect x="1.5" y="1012.5" width="2.1" height="1.6" fill="#1c1c1c"/>
</svg>
<span class="vl" style="top:48.8px">-12</span><span class="vl" style="top:117.2px">-8</span><span class="vl" style="top:185.6px">-4</span><span class="vl" style="top:254.0px">0</span><span class="vl" style="top:322.4px">4</span><span class="vl" style="top:390.8px">8</span><span class="vl" style="top:459.2px">12</span><span class="vl" style="top:527.6px">16</span><span class="vl" style="top:596.0px">20</span><span class="vl" style="top:664.4px">24</span><span class="vl" style="top:732.8px">28</span><span class="vl" style="top:801.2px">32</span><span class="vl" style="top:869.6px">36</span><span class="vl" style="top:938.0px">40</span><span class="vl" style="top:1006.4px">44</span>
</div>
<div id="canvas"><div id="paper">
<div id="pgL"></div>
<div id="pgR"></div>
<div id="mg"></div>
<div id="tbox">
<i class="h" style="left:-2.8px;top:-2.8px"></i><i class="h" style="left:142px;top:-2.8px"></i><i class="h" style="left:286.3px;top:-2.8px"></i>
<i class="h" style="left:-2.8px;top:101.3px"></i><i class="h" style="left:286.3px;top:101.3px"></i>
<i class="h" style="left:-2.8px;top:205.3px"></i><i class="h" style="left:142px;top:205.3px"></i><i class="h" style="left:286.3px;top:205.3px"></i>
<i class="dot" style="left:-9.2px;top:-1.4px"></i><i class="dot" style="left:287.6px;top:154px;background:#8a86ae"></i><i class="dot" style="left:-1.6px;top:50.5px;background:#777"></i>
</div>
<div id="txt">应用玩客 apppvp.com<br>应用玩客 apppvp.com<br>应用玩客 apppvp.com<br>应用玩客 apppvp.com<br>应用玩客 apppvp.com</div>
<div id="tip"><div id="tipin"><i style="position:absolute;left:4px;right:4px;top:36.6px;height:1.2px;background:rgba(0,0,0,.2)"></i></div><span class="k" style="top:11.7px">Width:</span><span class="v" style="top:11.7px">25.9754cm</span><span class="k" style="top:29.1px">Height:</span><span class="v" style="top:29.1px">24.1706cm</span></div>
</div></div>
</div>
<div id="insp">
<div id="ititle"><i id="iclose"></i><span>Inspectors</span></div>
<div id="itabs"><div id="iseg"><div id="isel"></div><i class="idv" style="left:36.1px"></i><i class="idv" style="left:71.2px"></i><i class="idv" style="left:176.5px"></i><i class="idv" style="left:212.0px"></i><svg width="248" height="18" viewBox="0 0 248 18" style="position:absolute;left:0;top:0">
<g transform="translate(18.3,9)"><path d="M-4.4,-5.3 L1.2,-5.3 L4.4,-2 L4.4,5.3 L-4.4,5.3 Z" fill="#1b1b1b"/><path d="M1,-5.6 L1,-1.8 L4.7,-1.8" fill="none" stroke="#e3e3e3" stroke-width=".9"/></g>
<g transform="translate(53,9.2)" stroke="#1b1b1b" fill="none"><rect x="-3.9" y="-3.6" width="7.8" height="7.2" stroke-width="1.3"/><path d="M-5.6,-3.6H5.6M-5.6,3.6H5.6M-3.9,-5.4V5.4M3.9,-5.4V5.4" stroke-width="1.1"/><g fill="#1b1b1b" stroke="none"><circle cx="-3.9" cy="-3.6" r="1.1"/><circle cx="3.9" cy="-3.6" r="1.1"/><circle cx="-3.9" cy="3.6" r="1.1"/><circle cx="3.9" cy="3.6" r="1.1"/></g></g>
<g transform="translate(88.1,9)"><rect x="-3.2" y="-3.4" width="8.6" height="8.6" rx="1" fill="#1b1b1b"/><rect x="-5" y="-5.2" width="8.6" height="8.6" rx="1" fill="#f2f2f2" stroke="#1b1b1b" stroke-width="1.1"/></g>
<g transform="translate(158.5,9.2)"><path d="M0,-5 C3.4,-5 5.8,-2.9 5.8,-.2 C5.8,1.6 4.4,2.4 3.1,2.2 C1.9,2 1.2,2.6 1.5,3.6 C1.8,4.6 1.1,5 0,5 C-3.3,5 -5.8,2.8 -5.8,0 C-5.8,-2.8 -3.3,-5 0,-5 Z" fill="#1b1b1b"/><g fill="#fff"><circle cx="-3.2" cy="-.4" r="1.05"/><circle cx="-1.3" cy="-2.9" r="1.05"/><circle cx="1.7" cy="-2.9" r="1.05"/><circle cx="3.6" cy="-.5" r="1.05"/><circle cx="-1.8" cy="2.6" r="1.2"/></g></g>
<g transform="translate(193.8,9.3)"><rect x="-5.4" y="-4.6" width="10.8" height="9.2" fill="#555"/><rect x="-3.9" y="-3.4" width="7.8" height="6.8" fill="#d8d8d8"/><circle cx="0" cy="0" r="2.6" fill="#f4f4f4" stroke="#2a2a2a" stroke-width="1.3"/></g>
<g transform="translate(229.1,9.3)"><path d="M-5.6,-3.4 H-2.6 L-1.6,-5 H1.6 L2.6,-3.4 H5.6 V4.7 H-5.6 Z" fill="#ededed" stroke="#1b1b1b" stroke-width="1.3" stroke-linejoin="round"/><circle cx="0" cy=".6" r="2.5" fill="#fff" stroke="#1b1b1b" stroke-width="1.3"/></g>
</svg><span id="itabA">A</span></div></div>
<div id="iscroll">
<div id="ihead"><svg width="10" height="8" viewBox="0 0 10 8" style="position:absolute;left:5px;top:5.4px"><path d="M1,1.5 L4.6,5.6 L8.2,1.5" fill="none" stroke="#9a9cab" stroke-width="1.1" stroke-linecap="round" stroke-linejoin="round"/></svg><b>Text</b></div>
<div class="bp" style="left:8.5px;top:25.8px;width:262px;height:22.4px"><span class="serif">Academy Engraved LET</span><svg class="chv" style="left:249.5px;top:5px" width="8" height="12" viewBox="0 0 8 12"><path d="M1.3,4.5 L4,1.9 L6.7,4.5 M1.3,7.5 L4,10.1 L6.7,7.5" fill="none" stroke="#b9b9b9" stroke-width="1.3" stroke-linecap="round" stroke-linejoin="round"/></svg></div>
<div class="bp" style="left:8.5px;top:59.2px;width:153.4px;height:22px"><span style="top:2px">Plain</span><svg class="chv" style="left:137.5px;top:5px" width="8" height="12" viewBox="0 0 8 12"><path d="M1.3,4.5 L4,1.9 L6.7,4.5 M1.3,7.5 L4,10.1 L6.7,7.5" fill="none" stroke="#b4b4b4" stroke-width="1.3" stroke-linecap="round" stroke-linejoin="round"/></svg></div>
<div class="bf" style="left:176.9px;top:57.5px;width:73.4px;height:22px"><span>No Selection</span></div>
<div class="bp" style="left:259.1px;top:58.5px;width:12px;height:20px;border-radius:4px"></div>
<div id="strack" style="left:17.6px;top:95.9px"></div><div id="sknob" style="left:8.6px;top:89.3px"></div>
<div class="bp" style="left:8.5px;top:114.9px;width:262px;height:22.2px"><span>No Selection</span><svg class="chv" style="left:249.5px;top:5px" width="8" height="12" viewBox="0 0 8 12"><path d="M1.3,4.5 L4,1.9 L6.7,4.5 M1.3,7.5 L4,10.1 L6.7,7.5" fill="none" stroke="#b9b9b9" stroke-width="1.3" stroke-linecap="round" stroke-linejoin="round"/></svg></div>
<span class="dl" style="left:8.4px;top:149.7px">Kerning:</span><div class="sf" style="left:54.3px;top:149.9px;width:94.4px"><span>No Selection</span></div>
<i class="sep" style="top:172.1px"></i>
<i class="cb" style="left:8.4px;top:183.4px"></i><span class="gl rl" style="top:183.2px">Underlined</span><div class="sp" style="left:98.6px;top:182.5px"><span>No Selection</span><svg width="6" height="9" viewBox="0 0 6 9" style="position:absolute;left:83.6px;top:2px"><path d="M1.2,3.3 L3,1.5 L4.8,3.3 M1.2,5.7 L3,7.5 L4.8,5.7" fill="none" stroke="#bdbdbd" stroke-width="1" stroke-linecap="round" stroke-linejoin="round"/></svg></div>
<i class="cb" style="left:8.4px;top:200.3px"></i><span class="gl rl" style="top:200.1px">Strikethrough</span><div class="sp" style="left:98.6px;top:199.4px"><span>No Selection</span><svg width="6" height="9" viewBox="0 0 6 9" style="position:absolute;left:83.6px;top:2px"><path d="M1.2,3.3 L3,1.5 L4.8,3.3 M1.2,5.7 L3,7.5 L4.8,5.7" fill="none" stroke="#bdbdbd" stroke-width="1" stroke-linecap="round" stroke-linejoin="round"/></svg></div>
<i class="cb" style="left:8.4px;top:217.5px"></i><span class="gl rl" style="top:217.3px">Outlined</span><div class="sp" style="left:98.6px;top:216.6px"><span>No Selection</span><svg width="6" height="9" viewBox="0 0 6 9" style="position:absolute;left:83.6px;top:2px"><path d="M1.2,3.3 L3,1.5 L4.8,3.3 M1.2,5.7 L3,7.5 L4.8,5.7" fill="none" stroke="#bdbdbd" stroke-width="1" stroke-linecap="round" stroke-linejoin="round"/></svg></div>
<span class="dl rl" style="top:235.6px">Thickness:</span><div class="sf" style="left:99.0px;top:234.8px;width:93.4px;border-color:transparent transparent #e2e2e2 transparent"><span style="left:3.6px">No Selection</span></div>
<i class="cb" style="left:8.4px;top:253.6px"></i><span class="gl rl" style="top:253.4px">Shadowed</span><div class="sp" style="left:98.6px;top:252.7px"><span>No Selection</span><svg width="6" height="9" viewBox="0 0 6 9" style="position:absolute;left:83.6px;top:2px"><path d="M1.2,3.3 L3,1.5 L4.8,3.3 M1.2,5.7 L3,7.5 L4.8,5.7" fill="none" stroke="#bdbdbd" stroke-width="1" stroke-linecap="round" stroke-linejoin="round"/></svg></div>
<span class="dl rl" style="top:271.5px">Radius:</span><div class="sf" style="left:99.0px;top:270.7px;width:93.4px;border-color:transparent transparent #e2e2e2 transparent"><span style="left:3.6px">No Selection</span></div>
<i class="cb" style="left:8.4px;top:290.9px"></i><span class="gl" style="left:23.5px;top:290.3px">Superscript</span><i class="cb" style="left:88.8px;top:290.6px"></i><span class="gl" style="left:103.8px;top:290.3px">Subscript</span>
<i class="cb" style="left:8.4px;top:309.7px"></i><span class="gl rl" style="top:310.1px">Expanded</span><div class="sf" style="left:99.2px;top:307.9px;width:94px;border-color:transparent transparent #e2e2e2 transparent"><span style="left:6.2px">No Selection</span><i class="cbtn"><svg width="7" height="6" viewBox="0 0 7 6"><path d="M1.6,1.9 L3.5,3.8 L5.4,1.9" fill="none" stroke="#bdbdbd" stroke-width="1" stroke-linecap="round" stroke-linejoin="round"/></svg></i></div>
<i class="cb" style="left:8.4px;top:329.2px"></i><span class="gl rl" style="top:329.6px">Oblique</span><div class="sf" style="left:99.2px;top:327.4px;width:94px;border-color:transparent transparent #e2e2e2 transparent"><span style="left:6.2px">No Selection</span><i class="cbtn"><svg width="7" height="6" viewBox="0 0 7 6"><path d="M1.6,1.9 L3.5,3.8 L5.4,1.9" fill="none" stroke="#bdbdbd" stroke-width="1" stroke-linecap="round" stroke-linejoin="round"/></svg></i></div>
<span class="dl rl2" style="top:253.4px">X:</span><div class="sf" style="left:220.0px;top:252.6px;width:60px;border-color:transparent transparent #e2e2e2 transparent"><span style="left:3px">No Selection</span></div>
<span class="dl rl2" style="top:271.5px">Y:</span><div class="sf" style="left:220.0px;top:270.7px;width:60px;border-color:transparent transparent #e2e2e2 transparent"><span style="left:3px">No Selection</span></div>
<span class="dl rl2" style="top:290.7px">+/-</span><div class="sf" style="left:220.0px;top:289.9px;width:60px;border-color:transparent transparent #e2e2e2 transparent"><span style="left:3px">No Selection</span></div>
<div id="tg" style="left:219.0px;top:211.8px"><svg width="50" height="17" viewBox="0 0 50 17" style="position:absolute;left:0;top:0"><circle cx="12.6" cy="8.6" r="4" fill="none" stroke="#8b8b8b" stroke-width="1"/><circle cx="12.6" cy="8.6" r="1.5" fill="#8b8b8b"/><path d="M26,0V17" stroke="#bcbcbc" stroke-width="1"/><circle cx="40.4" cy="8.6" r="4" fill="#bfe0b0" stroke="#8cc274" stroke-width="1.2"/></svg></div>
<i class="sep" style="top:348.9px"></i>
<div id="al" style="left:8.4px;top:358.4px"><svg width="112" height="20.4" viewBox="0 0 112 20.4" style="position:absolute;left:0;top:0"><rect x=".5" y=".5" width="111" height="19.4" fill="#fdfdfd" stroke="#b9b9b9"/><rect x=".5" y=".5" width="27.4" height="19.4" fill="#bfbfbf" stroke="#a9a9a9"/><path d="M27.9,0.5V19.9" stroke="#b9b9b9"/><path d="M55.8,0.5V19.9" stroke="#b9b9b9"/><path d="M83.7,0.5V19.9" stroke="#b9b9b9"/><rect x="3.6" y="4.6" width="20.6" height="1.2" fill="#8a8a8a"/><rect x="3.6" y="7.2" width="13.2" height="1.2" fill="#8a8a8a"/><rect x="3.6" y="9.8" width="20.6" height="1.2" fill="#8a8a8a"/><rect x="3.6" y="12.4" width="15.6" height="1.2" fill="#8a8a8a"/><rect x="3.6" y="15.0" width="20.6" height="1.2" fill="#8a8a8a"/><rect x="31.6" y="4.6" width="20.6" height="1.2" fill="#a3a3a3"/><rect x="35.3" y="7.2" width="13.2" height="1.2" fill="#a3a3a3"/><rect x="31.6" y="9.8" width="20.6" height="1.2" fill="#a3a3a3"/><rect x="34.1" y="12.4" width="15.6" height="1.2" fill="#a3a3a3"/><rect x="31.6" y="15.0" width="20.6" height="1.2" fill="#a3a3a3"/><rect x="59.4" y="4.6" width="20.6" height="1.2" fill="#a3a3a3"/><rect x="59.4" y="7.2" width="20.6" height="1.2" fill="#a3a3a3"/><rect x="59.4" y="9.8" width="20.6" height="1.2" fill="#a3a3a3"/><rect x="59.4" y="12.4" width="20.6" height="1.2" fill="#a3a3a3"/><rect x="59.4" y="15.0" width="20.6" height="1.2" fill="#a3a3a3"/><rect x="87.4" y="4.6" width="20.6" height="1.2" fill="#a3a3a3"/><rect x="94.8" y="7.2" width="13.2" height="1.2" fill="#a3a3a3"/><rect x="87.4" y="9.8" width="20.6" height="1.2" fill="#a3a3a3"/><rect x="92.4" y="12.4" width="15.6" height="1.2" fill="#a3a3a3"/><rect x="87.4" y="15.0" width="20.6" height="1.2" fill="#a3a3a3"/></svg></div>
<div id="td" style="left:216.6px;top:359.0px"><svg width="50" height="19.4" viewBox="0 0 50 19.4" style="position:absolute;left:0;top:0"><rect x=".5" y=".5" width="56" height="18.4" fill="#fdfdfd" stroke="#b9b9b9"/><rect x=".5" y=".5" width="28" height="18.4" fill="#c1c1c1" stroke="#adadad"/><path d="M17.4,9.8H24.4M22,7.6L24.6,9.8L22,12" fill="none" stroke="#8a8a8a" stroke-width="1"/><path d="M40,9.8H33.4M35.8,7.6L33.2,9.8L35.8,12" fill="none" stroke="#a0a0a0" stroke-width="1"/></svg><span class="T1">T</span><span class="T2">T</span></div>
<svg width="22" height="14" viewBox="0 0 22 14" style="position:absolute;left:8.4px;top:389.1px"><path d="M0,2.2H6M4.2,0.6L6.2,2.2L4.2,3.8" fill="none" stroke="#1d1d1d" stroke-width="1.2"/><g fill="#1d1d1d"><rect x="12" y="3" width="8" height="1.6"/><rect x="9.4" y="5.6" width="10.6" height="1.6"/><rect x="9.4" y="8.2" width="7.6" height="1.6"/><rect x="9.4" y="10.8" width="10.6" height="1.6"/></g></svg><div class="sf" style="left:34.2px;top:389.1px;width:52.6px;height:12.6px;border-color:transparent #f4f4f4 #e2e2e2 #f4f4f4"><span style="left:3.4px">No Selection</span></div>
<svg width="22" height="14" viewBox="0 0 22 14" style="position:absolute;left:108.6px;top:389.1px"><path d="M0,6.4H5.2M3.6,4.8L5.6,6.4L3.6,8" fill="none" stroke="#1d1d1d" stroke-width="1.3"/><path d="M8.4,1V12" stroke="#9a9a9a" stroke-width=".8"/><g fill="#1d1d1d"><rect x="10.4" y="1.4" width="10" height="1.6"/><rect x="10.4" y="4" width="8" height="1.6"/><rect x="10.4" y="6.6" width="10" height="1.6"/><rect x="10.4" y="9.2" width="8" height="1.6"/><rect x="10.4" y="11.6" width="10" height="1.2"/></g></svg><div class="sf" style="left:134.3px;top:389.1px;width:52.6px;height:12.6px;border-color:transparent #f4f4f4 #e2e2e2 #f4f4f4"><span style="left:3.4px">No Selection</span></div>
<svg width="22" height="14" viewBox="0 0 22 14" style="position:absolute;left:194.2px;top:389.1px"><g fill="#1d1d1d"><rect x="0" y="1.4" width="8.6" height="1.6"/><rect x="0" y="4" width="8.6" height="1.6"/><rect x="0" y="6.6" width="8.6" height="1.6"/><rect x="0" y="9.2" width="8.6" height="1.6"/><rect x="0" y="11.6" width="8.6" height="1.2"/></g><path d="M10.4,1V12" stroke="#9a9a9a" stroke-width=".8"/><path d="M20.4,6.4H13M14.8,4.8L12.8,6.4L14.8,8" fill="none" stroke="#1d1d1d" stroke-width="1.3"/></svg><div class="sf" style="left:219.8px;top:389.1px;width:60.0px;height:12.6px;border-color:transparent #f4f4f4 #e2e2e2 #f4f4f4"><span style="left:3.4px">No Selection</span></div>
<svg width="22" height="14" viewBox="0 0 22 14" style="position:absolute;left:8.4px;top:410.3px"><path d="M0,2.2H5.6M4,0.6L6,2.2L4,3.8" fill="none" stroke="#1d1d1d" stroke-width="1.2"/><g fill="#1d1d1d"><rect x="7.8" y="1.6" width="12.4" height="1.8"/><rect x="7.8" y="5" width="10" height="1.6"/><rect x="10" y="8" width="8" height="1.6"/><rect x="10" y="11" width="6" height="1.4"/></g></svg><div class="sf" style="left:34.2px;top:410.3px;width:52.6px;height:12.6px;border-color:transparent #f4f4f4 #e2e2e2 #f4f4f4"><span style="left:3.4px">No Selection</span></div>
<svg width="22" height="14" viewBox="0 0 22 14" style="position:absolute;left:108.6px;top:410.3px"><g fill="#1d1d1d"><rect x="9.6" y="0.6" width="8" height="1.6"/><rect x="8" y="3.4" width="10.6" height="1.6"/><rect x="8" y="6.2" width="8.6" height="1.6"/><rect x="8" y="9.4" width="12.4" height="2.6"/></g><path d="M0,10.8H5.6M4,9.2L6,10.8L4,12.4" fill="none" stroke="#1d1d1d" stroke-width="1.2"/></svg><div class="sf" style="left:134.3px;top:410.3px;width:52.6px;height:12.6px;border-color:transparent #f4f4f4 #e2e2e2 #f4f4f4"><span style="left:3.4px">No Selection</span></div>
<svg width="22" height="14" viewBox="0 0 22 14" style="position:absolute;left:194.2px;top:410.3px"><g fill="#1d1d1d"><rect x="0" y="1" width="10" height="1.6"/><rect x="0" y="3.8" width="8" height="1.6"/><rect x="0" y="6.6" width="10" height="1.6"/><rect x="0" y="9.4" width="8" height="1.6"/><rect x="0" y="12" width="10" height="1.2"/></g><path d="M17.6,1.2V12.6M15.8,3.4L17.6,1L19.4,3.4M15.8,10.4L17.6,12.8L19.4,10.4" fill="none" stroke="#1d1d1d" stroke-width="1.2"/></svg><div class="sf" style="left:219.8px;top:410.3px;width:60.0px;height:12.6px;border-color:transparent #f4f4f4 #e2e2e2 #f4f4f4"><span style="left:3.4px">No Selection</span></div>
</div>
<div id="isb"><i></i></div>
</div>
<div id="tools">
<i id="tclose"></i>
<svg width="9" height="8" viewBox="0 0 9 8" style="position:absolute;left:47.4px;top:2.8px"><path d="M4.4,0.6 L4.4,7 L0.4,3.8 Z M8.4,0.6 L8.4,7 L4.4,3.8 Z" fill="#c3c3c9"/></svg>
<div class="tc" style="left:7.6px;top:23.8px"><svg width="23.4" height="23.2" viewBox="0 0 23.4 23.2"><path d="M7.7,3.2 L7.7,16.4 L10.7,13.7 L12.9,18.9 L15.1,17.9 L12.9,12.9 L17.3,12.7 Z" fill="#000"/></svg></div>
<div class="tc" style="left:32.3px;top:23.8px"><svg width="23.4" height="23.2" viewBox="0 0 23.4 23.2"><path d="M17.4,7.2 A7,7 0 0 1 7.2,15.8" fill="none" stroke="#000" stroke-width="1.6"/><path d="M16.1,3.9 L19.9,6.2 L15.2,8.5 Z" fill="#000"/><path d="M4.3,14.2 L8.6,13.6 L6,17.9 Z" fill="#000"/></svg></div>
<div class="tc" style="left:7.6px;top:48.3px"><svg width="23.4" height="23.2" viewBox="0 0 23.4 23.2"><rect x="4.2" y="4" width="15" height="15.2" fill="none" stroke="#555" stroke-width=".8" stroke-dasharray="1 1"/><rect x="4.6" y="4.8" width="5.8" height="5.4" fill="#d9d9d9" stroke="#000" stroke-width="1.2"/><path d="M7.5,4.8V10.2M4.6,7.5H10.4" stroke="#000" stroke-width=".6"/><path d="M10.8,10.6 L15.6,15.2" stroke="#000" stroke-width="1.3"/><path d="M17.4,17 L13.4,15.9 L16.3,13 Z" fill="#000"/></svg></div>
<div class="tc" style="left:32.3px;top:48.3px"><svg width="23.4" height="23.2" viewBox="0 0 23.4 23.2"><rect x="4.6" y="8.2" width="4.4" height="10" rx="1" fill="#e9e9e9" stroke="#000" stroke-width="1.3"/><path d="M12.6,17.8 L14.6,9.2 L17.8,9.2 L15.8,17.8 Z" fill="#b5b5b5" stroke="#8c8c8c" stroke-width=".8"/><path d="M7.4,7 C8.4,3.6 13.6,3 16,6.4" fill="none" stroke="#000" stroke-width="1.3"/><path d="M17.8,8.2 L13.9,7.3 L17.1,4.3 Z" fill="#000"/></svg></div>
<div class="tc tsel" style="left:7.6px;top:80.6px"><span>T</span></div>
<div class="tc" style="left:32.3px;top:80.6px"><svg width="23.4" height="23.2" viewBox="0 0 23.4 23.2"><rect x="4" y="5.6" width="15.8" height="12" fill="#3b99e2"/><path d="M4,13.2 C7,11.6 9,11.8 11.6,12.6 C14,13.2 16.6,12.2 19.8,11.6 L19.8,17.6 L4,17.6 Z" fill="#3d9b3f"/><circle cx="7" cy="8.2" r="1.7" fill="#f1ee5a"/></svg></div>
<div class="tc" style="left:7.6px;top:105.1px"><svg width="23.4" height="23.2" viewBox="0 0 23.4 23.2"><rect x="5.2" y="5" width="14" height="14" fill="none" stroke="#000" stroke-width="1.4"/><path d="M5.2,5 L19.2,19 M19.2,5 L5.2,19" stroke="#000" stroke-width="1.2"/><path d="M23.4,17.6 L23.4,23.2 L17.8,23.2 Z" fill="#7e7e7e"/></svg></div>
<div class="tc" style="left:32.3px;top:105.1px"><svg width="23.4" height="23.2" viewBox="0 0 23.4 23.2"><rect x="5" y="5" width="14.2" height="14" fill="none" stroke="#000" stroke-width="1.4"/><path d="M23.4,17.6 L23.4,23.2 L17.8,23.2 Z" fill="#7e7e7e"/></svg></div>
<div class="tc" style="left:7.6px;top:129.7px"><svg width="23.4" height="23.2" viewBox="0 0 23.4 23.2"><path d="M5.4,5 L19.4,18.2" stroke="#000" stroke-width="1.3"/><path d="M23.4,17.6 L23.4,23.2 L17.8,23.2 Z" fill="#7e7e7e"/></svg></div>
<div class="tc" style="left:32.3px;top:129.7px"><svg width="23.4" height="23.2" viewBox="0 0 23.4 23.2"><g transform="translate(11.6,11.4) rotate(-38)"><path d="M-2.4,-7 L2.4,-7 L2.8,-2.4 C4.6,0.4 3.6,3.6 0,8 C-3.6,3.6 -4.6,0.4 -2.8,-2.4 Z" fill="#fff" stroke="#000" stroke-width="1.1" stroke-linejoin="round"/><path d="M0,7.4 L0,1.6" stroke="#000" stroke-width=".9"/><circle cx="0" cy="0.6" r="1.1" fill="#000"/><path d="M-2.8,-2.6 H2.8" stroke="#000" stroke-width=".9"/></g><path d="M23.4,17.6 L23.4,23.2 L17.8,23.2 Z" fill="#7e7e7e"/></svg></div>
<div class="tc" style="left:7.6px;top:161.3px"><svg width="23.4" height="23.2" viewBox="0 0 23.4 23.2"><path d="M8,19.4 C6.4,17.4 5,15.2 4.2,13.6 C3.6,12.4 5,11.6 6,12.6 L7.6,14.4 L6.8,7.2 C6.7,5.8 8.5,5.6 8.8,7 L9.6,11 L9.6,5.4 C9.6,4 11.6,4 11.7,5.4 L12,10.8 L12.9,6 C13.2,4.7 15,5 14.9,6.4 L14.5,11.4 L15.8,8.2 C16.3,7 18,7.6 17.6,8.9 C16.8,12 16.6,14.2 16.2,16 C15.9,17.4 15.2,18.6 14.6,19.6 Z" fill="#fff" stroke="#000" stroke-width="1" stroke-linejoin="round"/><path d="M10,14.6V17.6M12,14.6V17.6M14,14.6V17.6" stroke="#000" stroke-width=".7"/></svg></div>
<div class="tc" style="left:32.3px;top:161.3px"><svg width="23.4" height="23.2" viewBox="0 0 23.4 23.2"><circle cx="9.6" cy="10.2" r="4.7" fill="none" stroke="#000" stroke-width="1.5"/><path d="M13,13.6 L18.4,18.6" stroke="#000" stroke-width="2" stroke-linecap="round"/></svg></div>
</div>
</body></html>
